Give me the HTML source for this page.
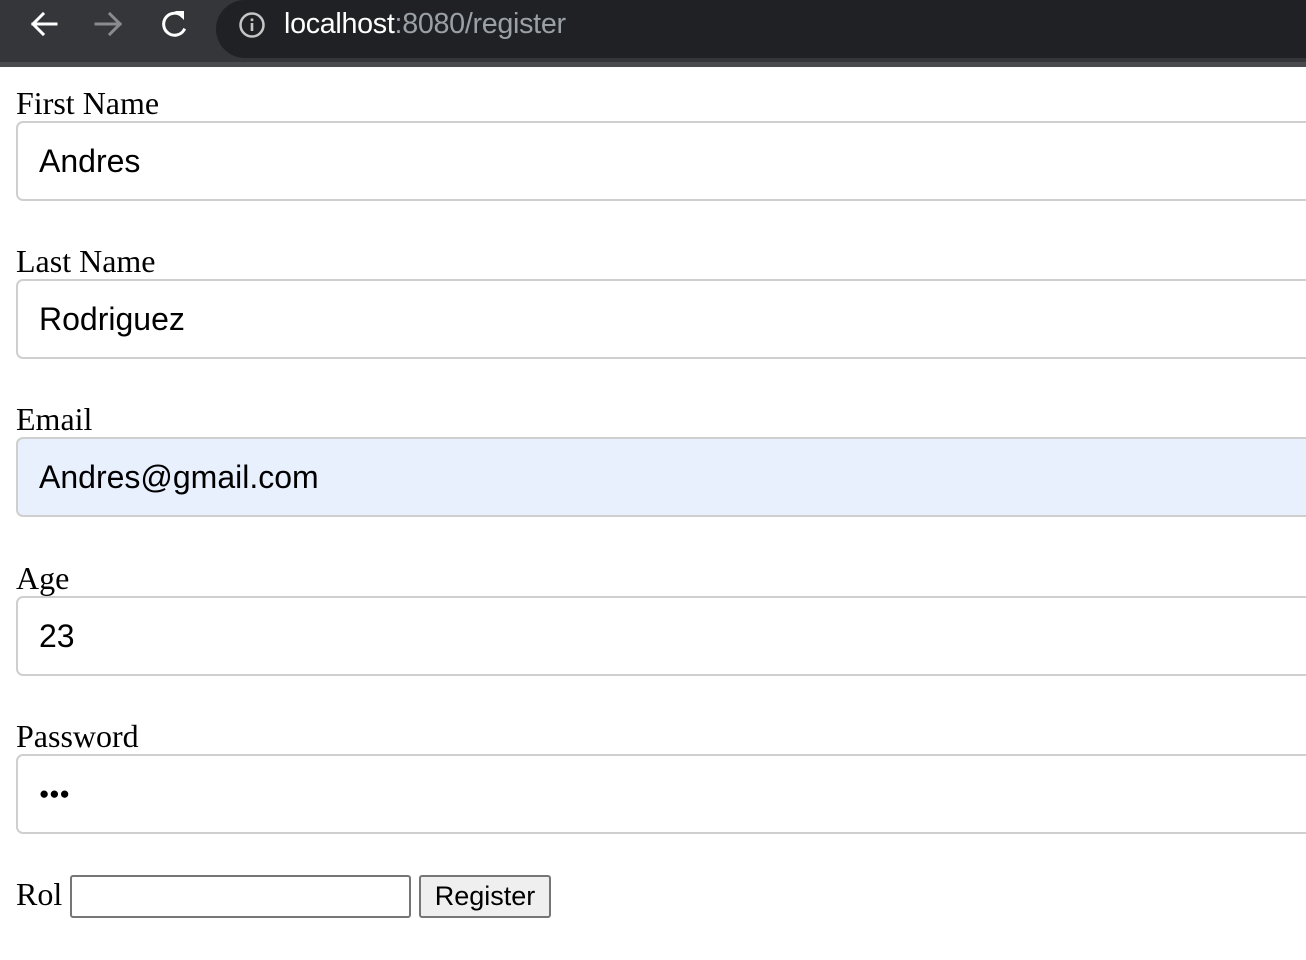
<!DOCTYPE html>
<html><head><style>
body{margin:0;width:1306px;height:960px;overflow:hidden;background:#fff;position:relative;font-family:"Liberation Serif",serif}
.bar{position:absolute;left:0;top:0;width:1306px;height:64px;background:#35363a}
.stripe{position:absolute;left:0;top:62px;width:1306px;height:5px;background:#4a4b4f}
.pill{position:absolute;left:216px;top:0;width:1200px;height:58px;background:#202124;border-radius:0 0 0 29px;border-top-left-radius:29px}
.url{position:absolute;left:284px;top:8px;font:28.7px "Liberation Sans",sans-serif;color:#fff;letter-spacing:-0.3px}
.url span{color:#9aa0a6}
.lbl{position:absolute;left:16px;font-size:32px;color:#000}
.inp{position:absolute;left:16px;width:1320px;height:76px;border:2px solid #cfcfcf;border-radius:7px;box-sizing:content-box;font:32px "Liberation Sans",sans-serif;color:#000;line-height:76px;padding-left:21px}
</style></head><body>
<div class="bar"></div><div class="stripe"></div>
<div class="pill"></div>
<svg style="position:absolute;left:28px;top:8px" width="180" height="32" viewBox="0 0 180 32">
<g fill="none" stroke-width="3" stroke-linecap="square">
<path d="M5 16H28M15 6L5 16L15 26" stroke="#fff"/>
<path d="M68 16H92M82 6L92 16L82 26" stroke="#8a8b8d"/>
<path d="M154 8A11 11 0 1 0 156 22" stroke="#fff"/>
</g>
<path d="M147 3L156 3L156 12Z" fill="#fff"/>
</svg>
<svg style="position:absolute;left:238px;top:11px" width="28" height="28" viewBox="0 0 28 28"><circle cx="14" cy="14" r="11.5" fill="none" stroke="#c4c7c5" stroke-width="2.5"/><rect x="12.7" y="12" width="2.6" height="8" fill="#c4c7c5"/><rect x="12.7" y="7.5" width="2.6" height="2.6" fill="#c4c7c5"/></svg>
<div class="url">localhost<span>:8080/register</span></div>

<div class="lbl" style="top:85px">First Name</div>
<div class="inp" style="top:121px">Andres</div>
<div class="lbl" style="top:243px">Last Name</div>
<div class="inp" style="top:279px">Rodriguez</div>
<div class="lbl" style="top:401px">Email</div>
<div class="inp" style="top:437px;background:#e8f0fe">Andres@gmail.com</div>
<div class="lbl" style="top:560px">Age</div>
<div class="inp" style="top:596px">23</div>
<div class="lbl" style="top:718px">Password</div>
<div class="inp" style="top:754px;font-size:17px;letter-spacing:0px">&#9679;&#9679;&#9679;</div>

<div class="lbl" style="top:876px">Rol</div>
<div style="position:absolute;left:70px;top:875px;width:337px;height:39px;border:2px solid #767676;border-radius:3px"></div>
<div style="position:absolute;left:419px;top:875px;width:128px;height:39px;border:2px solid #767676;border-radius:3px;background:#efefef;font:27px 'Liberation Sans',sans-serif;text-align:center;line-height:38px">Register</div>
</body></html>
